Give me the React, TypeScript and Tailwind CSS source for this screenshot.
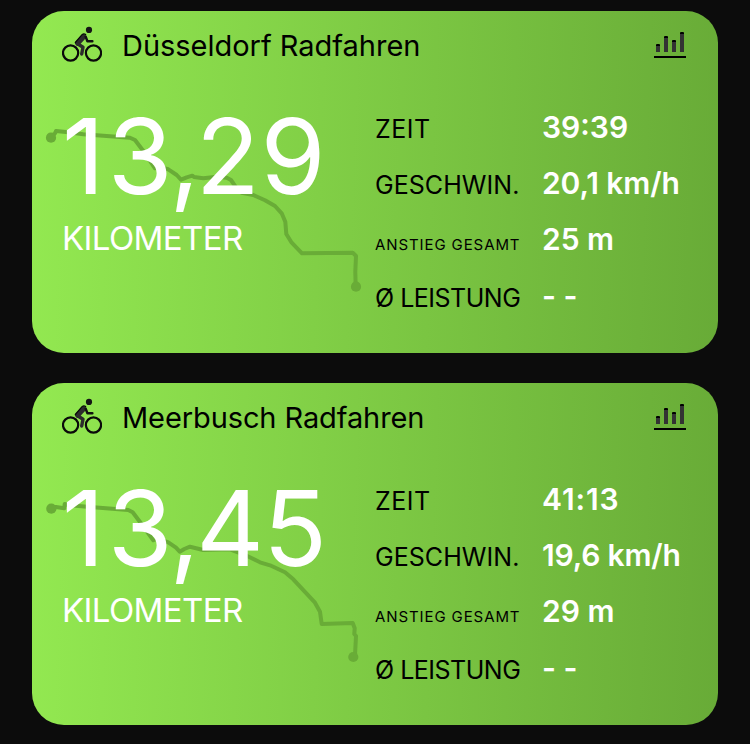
type Point = [number, number];

type Ride = {
  title: string;
  titleClass: string;
  // each glyph of the big number with its own kerning
  distance: [string, string][];
  route: Point[];
  start: Point;
  end: Point;
  stats: { label: string; value: string; labelClass: string; valueClass?: string }[];
};

const labels = {
  time: "text-[25px] tracking-[0.5px]",
  speed: "text-[25px] tracking-[0.05px]",
  climb: "text-[15px] tracking-[0.9px]",
  power: "text-[25px] tracking-[-0.5px]",
};

const rides: Ride[] = [
  {
    title: "Düsseldorf Radfahren",
    titleClass: "tracking-[-0.02px]",
    distance: [
      ["1", "tracking-[3px]"], ["3", "tracking-[-3px]"], [",", "tracking-[-4px]"],
      ["2", "tracking-[0.5px]"], ["9", ""],
    ],
    start: [18.7, 126.7],
    end: [323.7, 275.7],
    route: [
      [18.7, 126.7], [23, 122.3], [24, 120], [36.3, 121.3], [51.3, 123.3], [98, 126.7], [103, 129],
      [113, 142.3], [123, 157.3], [126, 155.7], [136.3, 158.3], [144.7, 164], [149, 168.7],
      [154.7, 166.3], [160.3, 164.7], [162, 166], [171.3, 167.3], [184.7, 165.7], [194.7, 166.7],
      [199, 169], [204.7, 177.3], [209.7, 181.7], [221.3, 184], [233, 189.3], [243, 195],
      [249.7, 202.3], [253.3, 210.7], [254.3, 223], [259.7, 231.7], [270, 242.3], [320.7, 241.7],
      [324, 245], [323.3, 260.7], [323.7, 275.7],
    ],
    stats: [
      { label: "ZEIT", value: "39:39", labelClass: labels.time },
      { label: "GESCHWIN.", value: "20,1 km/h", labelClass: labels.speed, valueClass: "tracking-[-0.1px]" },
      { label: "ANSTIEG GESAMT", value: "25 m", labelClass: labels.climb },
      { label: "Ø LEISTUNG", value: "- -", labelClass: labels.power },
    ],
  },
  {
    title: "Meerbusch Radfahren",
    titleClass: "tracking-[-0.1px]",
    distance: [
      ["1", "tracking-[3px]"], ["3", "tracking-[-3px]"], [",", "tracking-[-3.5px]"],
      ["4", "tracking-[-1px]"], ["5", ""],
    ],
    start: [19, 125.7],
    end: [321, 274],
    route: [
      [19, 125.7], [24, 124], [32.3, 125.3], [32.7, 121], [38, 122.3], [58, 124], [96.3, 127],
      [100.7, 129.3], [109.7, 141.3], [121.3, 157.3], [125.3, 155.3], [136.3, 159.3], [144, 164.7],
      [147.7, 168.7], [152.3, 166], [158, 163.7], [171.3, 167], [198, 166.3], [214.7, 172.7],
      [228, 179.3], [238, 182.3], [253, 189.3], [261.3, 196.3], [283, 219.7], [288, 228.7],
      [289.7, 241], [320.7, 240], [322.7, 245.3], [322.3, 251], [324, 253], [323, 272],
    ],
    stats: [
      { label: "ZEIT", value: "41:13", labelClass: labels.time, valueClass: "tracking-[0.9px]" },
      { label: "GESCHWIN.", value: "19,6 km/h", labelClass: labels.speed, valueClass: "tracking-[-0.2px]" },
      { label: "ANSTIEG GESAMT", value: "29 m", labelClass: labels.climb },
      { label: "Ø LEISTUNG", value: "- -", labelClass: labels.power },
    ],
  },
];

const BikeIcon = () => (
  <svg width="40" height="36" viewBox="0 0 40 36" fill="none" className="shrink-0">
    <circle cx="8.6" cy="27" r="7.6" stroke="#0a0a0a" strokeWidth="2.2" />
    <circle cx="31.5" cy="27" r="7.6" stroke="#0a0a0a" strokeWidth="2.2" />
    <circle cx="27" cy="3.9" r="3.1" fill="#151515" />
    <path d="M21.6 10.8 15.6 17.2" stroke="#2c2c2c" strokeWidth="5.2" strokeLinecap="round" />
    <path d="M23.6 10.5 25.4 15.2H30.4" stroke="#111" strokeWidth="2.4" strokeLinecap="round" strokeLinejoin="round" />
    <path d="M15.5 17.7 21 21.2 19.7 28" stroke="#2c2c2c" strokeWidth="3.4" strokeLinecap="round" strokeLinejoin="round" />
    <path d="M13.3 16.5 20 8.6Q21.8 7.2 23.7 8.4" stroke="#080808" strokeWidth="1.2" strokeLinecap="round" />
  </svg>
);

const ChartIcon = () => (
  <svg width="32" height="26" viewBox="0 0 32 26" className="shrink-0">
    <path d="M2 13h4v7H2zM10 5h4v15h-4zM18 9h4v11h-4zM26 1h4v19h-4z" fill="#333" />
    <path d="M2 14v-1.5L3 12h2l1 .5V14zM10 6V4.5l1-.5h2l1 .5V6zM18 10V8.5l1-.5h2l1 .5V10zM26 2V.5L27 0h2l1 .5V2z" fill="#000" />
    <path d="M0 24h32v2H0z" fill="#000" />
  </svg>
);

const Route = ({ route, start, end }: Pick<Ride, "route" | "start" | "end">) => (
  <svg className="absolute inset-0" width="686" height="342" fill="none">
    <polyline
      points={route.map((p) => p.join(",")).join(" ")}
      stroke="#69ac37"
      strokeWidth="4"
      strokeLinejoin="round"
    />
    <circle cx={start[0] + 0.3} cy={start[1]} r="5.1" fill="#69ac37" />
    <circle cx={end[0] + 0.3} cy={end[1]} r="5.1" fill="#69ac37" />
  </svg>
);

const RideCard = ({ ride }: { ride: Ride }) => (
  <section className="relative h-[342px] overflow-hidden rounded-[32px] bg-[linear-gradient(92deg,#93e951,#68ab37)]">
    <Route route={ride.route} start={ride.start} end={ride.end} />
    <div className="relative">
      <header className="flex h-[88px] items-start pl-[30px] pr-8 pt-[15px]">
        <BikeIcon />
        <h2 className={`ml-5 text-[29px] leading-10 whitespace-nowrap text-black ${ride.titleClass}`}>{ride.title}</h2>
        <div className="ml-auto pt-[6px]">
          <ChartIcon />
        </div>
      </header>
      <div className="flex">
        <div className="w-[343px] pl-[31px] text-white">
          <div className="-ml-px flex h-[118px] text-[105px] leading-[113px] whitespace-nowrap">
            {ride.distance.map(([glyph, kern], i) => (
              <span key={i} className={kern}>{glyph}</span>
            ))}
          </div>
          <div className="-ml-px text-[33px] leading-[42px] tracking-[-0.6px]">KILOMETER</div>
        </div>
        <dl>
          {ride.stats.map((s) => (
            <div key={s.label} className="flex h-14 items-baseline whitespace-nowrap last:pt-px">
              <dt className={`w-[167px] leading-[56px] text-black ${s.labelClass}`}>{s.label}</dt>
              <dd className={`text-[30px] leading-[56px] font-semibold text-white ${s.valueClass ?? ""}`}>{s.value}</dd>
            </div>
          ))}
        </dl>
      </div>
    </div>
  </section>
);

export default function App() {
  return (
    <main className="flex h-[744px] w-[750px] flex-col gap-[30px] overflow-hidden bg-[#0c0c0c] px-8 pt-[11px] font-['Inter',sans-serif]">
      {rides.map((ride, i) => (
        <RideCard key={i} ride={ride} />
      ))}
    </main>
  );
}
